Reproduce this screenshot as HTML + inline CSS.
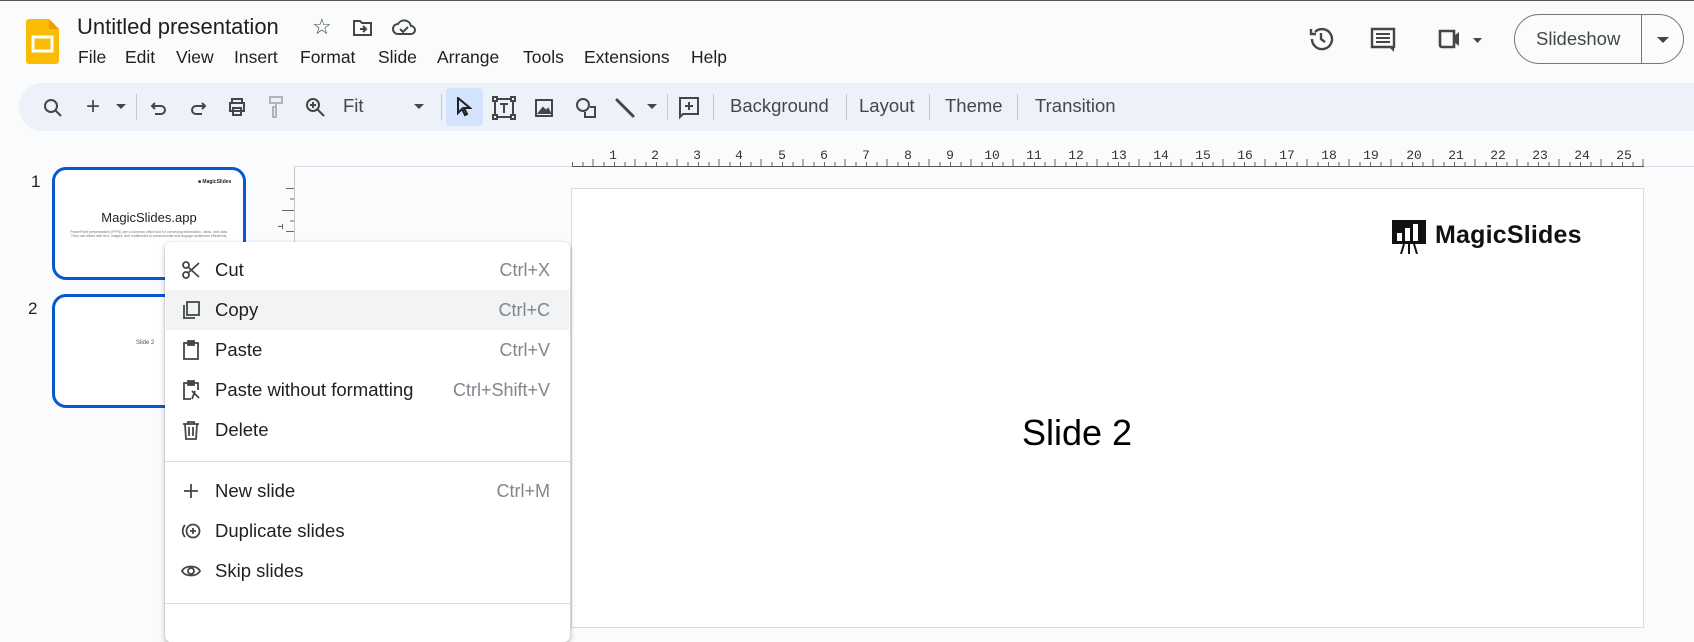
<!DOCTYPE html>
<html><head><meta charset="utf-8"><style>
*{margin:0;padding:0;box-sizing:border-box}
body{width:1694px;height:623px;overflow:hidden;background:#f9fbfd;font-family:"Liberation Sans",Arial,sans-serif;position:relative;color:#1f1f1f}
.a{position:absolute}
.ic{position:absolute;fill:none;stroke:#444746;stroke-width:2}
.tb{position:absolute;top:95px;font-size:18.5px;color:#444746}
.sep{position:absolute;top:94px;width:1px;height:26px;background:#c7c7c7}
.mi{position:absolute;left:165px;width:405px;height:40px;font-size:18.5px;line-height:40px}
.mi .t{position:absolute;left:50px}
.mi .k{position:absolute;right:20px;color:#80868b;font-size:18px}
.mi svg{position:absolute;left:16px;top:10px;width:20px;height:20px;fill:none;stroke:#444746;stroke-width:1.8}
</style></head><body>
<div class="a" style="left:0;top:0;width:1694px;height:1px;background:#555"></div>
<svg class="a" style="left:26px;top:19px" width="33" height="45" viewBox="0 0 33 45"><path d="M3 0h20l10 10v32a3 3 0 0 1-3 3H3a3 3 0 0 1-3-3V3a3 3 0 0 1 3-3z" fill="#fbbc04"/><path d="M23 0l10 10h-10z" fill="#f29900"/><rect x="7" y="18" width="19" height="14" fill="none" stroke="#fff" stroke-width="3"/></svg>
<div class="a" style="left:77px;top:14px;font-size:22px;color:#1f1f1f">Untitled presentation</div>
<div class="a" style="left:312px;top:14px;font-size:22px;color:#444746">☆</div>
<svg class="ic" style="left:353px;top:19px" width="20" height="18" viewBox="0 0 20 18"><path d="M1 2h6l2 2h9v12H1z"/><path d="M7 10h6M10 7l3 3-3 3"/></svg>
<svg class="ic" style="left:392px;top:18px" width="24" height="18" viewBox="0 0 24 18"><path d="M6 16a5 5 0 0 1 0-10 7 7 0 0 1 13 2 4 4 0 0 1 0 8z"/><path d="M8 11l3 3 5-5"/></svg>
<div class="a" style="top:47px;font-size:17.5px;left:0">
<span class="a" style="left:78px">File</span><span class="a" style="left:125px">Edit</span><span class="a" style="left:176px">View</span><span class="a" style="left:234px">Insert</span><span class="a" style="left:300px">Format</span><span class="a" style="left:378px">Slide</span><span class="a" style="left:437px">Arrange</span><span class="a" style="left:523px">Tools</span><span class="a" style="left:584px">Extensions</span><span class="a" style="left:691px">Help</span></div>
<svg class="ic" style="left:1308px;top:26px;stroke-width:2.4" width="26" height="26" viewBox="0 0 26 26"><path d="M4 13a10 10 0 1 0 3-7"/><path d="M3 3v5h5"/><path d="M13 7v6l4 3"/></svg>
<svg class="a" style="left:1370px;top:27px" width="26" height="26" viewBox="0 0 26 26"><path d="M2 2h22v18H2z" fill="none" stroke="#444746" stroke-width="2.4"/><path d="M6 7h14M6 11h14M6 15h14" stroke="#444746" stroke-width="2"/><path d="M19 20l5 5v-5z" fill="#444746"/></svg>
<svg class="a" style="left:1437px;top:28px" width="48" height="24" viewBox="0 0 48 24"><path d="M3 3h14v16H5a2 2 0 0 1-2-2z" fill="none" stroke="#444746" stroke-width="2.6"/><path d="M17 8l5-4v14l-5-4z" fill="#444746"/><path d="M36 10h9l-4.5 5z" fill="#444746"/></svg>
<div class="a" style="left:1514px;top:14px;width:170px;height:50px;border:1px solid #747775;border-radius:25px"></div>
<div class="a" style="left:1641px;top:15px;width:1px;height:48px;background:#747775"></div>
<div class="a" style="left:1536px;top:28px;font-size:18.5px;color:#444746">Slideshow</div>
<svg class="a" style="left:1656px;top:36px" width="14" height="8"><path d="M1 1h12l-6 6z" fill="#444746"/></svg>
<div class="a" style="left:19px;top:83px;width:1700px;height:48px;background:#edf2fa;border-radius:24px"></div>
<div class="a" style="left:446px;top:88px;width:37px;height:38px;background:#d3e3fd;border-radius:4px"></div>
<svg class="ic" style="left:43px;top:98px" width="20" height="20" viewBox="0 0 20 20"><circle cx="8" cy="8" r="6"/><path d="M12 12l6 6"/></svg>
<div class="tb" style="left:86px;top:93px;font-size:24px;color:#444746">+</div>
<svg class="a" style="left:116px;top:104px" width="10" height="6"><path d="M0 0h10l-5 5z" fill="#444746"/></svg>
<div class="sep" style="left:136px"></div>
<svg class="ic" style="left:150px;top:99px" width="18" height="18" viewBox="0 0 18 18"><path d="M5 4L2 7l3 3"/><path d="M2 7h9a4 4 0 0 1 0 8H5"/></svg>
<svg class="ic" style="left:189px;top:99px" width="18" height="18" viewBox="0 0 18 18"><path d="M13 4l3 3-3 3"/><path d="M16 7H7a4 4 0 0 0 0 8h6"/></svg>
<svg class="ic" style="left:227px;top:97px" width="20" height="20" viewBox="0 0 20 20"><path d="M5 6V2h10v4M3 6h14v8H3zM6 11h8v7H6z"/></svg>
<svg class="ic" style="left:267px;top:95px;stroke:#b0b4b8" width="18" height="24" viewBox="0 0 18 24"><path d="M3 2h12v6H3zM9 8v4H6v10h3V12"/></svg>
<svg class="ic" style="left:305px;top:97px" width="22" height="22" viewBox="0 0 22 22"><circle cx="8" cy="8" r="6"/><path d="M12 12l7 7M8 5v6M5 8h6"/></svg>
<div class="tb" style="left:343px">Fit</div>
<svg class="a" style="left:414px;top:104px" width="10" height="6"><path d="M0 0h10l-5 5z" fill="#444746"/></svg>
<div class="sep" style="left:441px"></div>
<svg class="a" style="left:456px;top:97px" width="16" height="20" viewBox="0 0 16 20"><path d="M2 1v15l4-4 3 6 2-1-3-6h6z" fill="none" stroke="#1f1f1f" stroke-width="2"/></svg>
<svg class="ic" style="left:492px;top:96px" width="24" height="24" viewBox="0 0 24 24"><rect x="1" y="1" width="4" height="4"/><rect x="19" y="1" width="4" height="4"/><rect x="1" y="19" width="4" height="4"/><rect x="19" y="19" width="4" height="4"/><path d="M5 3h14M5 21h14M3 5v14M21 5v14M8 8h8M12 8v9"/></svg>
<svg class="ic" style="left:534px;top:98px" width="20" height="20" viewBox="0 0 20 20"><rect x="2" y="2" width="16" height="16"/><path d="M5 15l4-5 3 3 2-2 2 4z" fill="#444746"/></svg>
<svg class="ic" style="left:575px;top:97px" width="22" height="22" viewBox="0 0 22 22"><circle cx="8" cy="8" r="6"/><path d="M15 10h5v10H10v-5"/></svg>
<svg class="a" style="left:614px;top:97px" width="22" height="22" viewBox="0 0 22 22"><path d="M3 3l16 16" stroke="#444746" stroke-width="3" stroke-linecap="round"/></svg>
<svg class="a" style="left:647px;top:104px" width="10" height="6"><path d="M0 0h10l-5 5z" fill="#444746"/></svg>
<div class="sep" style="left:667px"></div>
<svg class="ic" style="left:678px;top:96px" width="22" height="24" viewBox="0 0 22 24"><path d="M2 2h18v16H5l-3 3z"/><path d="M11 6v8M7 10h8"/></svg>
<div class="sep" style="left:713px"></div>
<div class="tb" style="left:730px">Background</div>
<div class="sep" style="left:846px"></div>
<div class="tb" style="left:859px">Layout</div>
<div class="sep" style="left:929px"></div>
<div class="tb" style="left:945px">Theme</div>
<div class="sep" style="left:1017px"></div>
<div class="tb" style="left:1035px">Transition</div>
<div class="a" style="left:31px;top:172px;font-size:17px">1</div>
<div class="a" style="left:28px;top:299px;font-size:17px">2</div>
<div class="a" style="left:52px;top:167px;width:194px;height:113px;border:3px solid #0b57d0;border-radius:14px;background:#fff;overflow:hidden">
<div class="a" style="left:143px;top:9px;font-size:5px;font-weight:bold">■ MagicSlides</div>
<div class="a" style="left:0;width:188px;top:40px;text-align:center;font-size:13px">MagicSlides.app</div>
<div class="a" style="left:12px;width:164px;top:60px;text-align:center;font-size:3.5px;line-height:4px;color:#777">PowerPoint presentations (PPTs) are a common office tool for conveying information, ideas, and data. They use slides with text, images, and multimedia to communicate and engage audiences effectively.</div></div>
<div class="a" style="left:52px;top:294px;width:194px;height:114px;border:3px solid #0b57d0;border-radius:14px;background:#fff">
<div class="a" style="left:81px;top:43px;font-size:6px;color:#555">Slide 2</div></div>
<div class="a" style="left:294px;top:166px;width:1px;height:460px;background:#c7c7c7"></div>
<div class="a" style="left:294px;top:166px;width:1400px;height:1px;background:#dadce0"></div>
<svg class="a" style="left:570px;top:146px" width="1080" height="22">
<line x1="2" y1="20.5" x2="1074" y2="20.5" stroke="#555"/>
<g font-family="Liberation Mono,monospace" font-size="13" fill="#333" text-anchor="middle">
<text x="43" y="13">1</text><text x="85" y="13">2</text><text x="127" y="13">3</text><text x="169" y="13">4</text><text x="212" y="13">5</text><text x="254" y="13">6</text><text x="296" y="13">7</text><text x="338" y="13">8</text><text x="380" y="13">9</text><text x="422" y="13">10</text><text x="464" y="13">11</text><text x="506" y="13">12</text><text x="549" y="13">13</text><text x="591" y="13">14</text><text x="633" y="13">15</text><text x="675" y="13">16</text><text x="717" y="13">17</text><text x="759" y="13">18</text><text x="801" y="13">19</text><text x="844" y="13">20</text><text x="886" y="13">21</text><text x="928" y="13">22</text><text x="970" y="13">23</text><text x="1012" y="13">24</text><text x="1054" y="13">25</text>
</g>
<path stroke="#666" d="M2.5 20v-4M13 20v-4M23 20v-7M34 20v-4M44.5 20v-4M55 20v-4M65 20v-7M76 20v-4M86.5 20v-4M97 20v-4M107 20v-7M118 20v-4M128.5 20v-4M139 20v-4M149 20v-7M160 20v-4M170.5 20v-4M181 20v-4M191 20v-7M202 20v-4M212.5 20v-4M223 20v-4M233 20v-7M244 20v-4M254.5 20v-4M265 20v-4M275 20v-7M286 20v-4M296.5 20v-4M307 20v-4M317 20v-7M328 20v-4M338.5 20v-4M349 20v-4M359 20v-7M370 20v-4M380.5 20v-4M391 20v-4M401 20v-7M412 20v-4M422.5 20v-4M433 20v-4M443 20v-7M454 20v-4M464.5 20v-4M475 20v-4M485 20v-7M496 20v-4M506.5 20v-4M517 20v-4M527 20v-7M538 20v-4M548.5 20v-4M559 20v-4M569 20v-7M580 20v-4M590.5 20v-4M601 20v-4M611 20v-7M622 20v-4M632.5 20v-4M643 20v-4M653 20v-7M664 20v-4M674.5 20v-4M685 20v-4M695 20v-7M706 20v-4M716.5 20v-4M727 20v-4M737 20v-7M748 20v-4M758.5 20v-4M769 20v-4M779 20v-7M790 20v-4M800.5 20v-4M811 20v-4M821 20v-7M832 20v-4M842.5 20v-4M853 20v-4M863 20v-7M874 20v-4M884.5 20v-4M895 20v-4M905 20v-7M916 20v-4M926.5 20v-4M937 20v-4M947 20v-7M958 20v-4M968.5 20v-4M979 20v-4M989 20v-7M1000 20v-4M1010.5 20v-4M1021 20v-4M1031 20v-7M1042 20v-4M1052.5 20v-4M1063 20v-4M1073 20v-7"/>
</svg>
<svg class="a" style="left:278px;top:186px" width="16" height="56"><path stroke="#666" d="M8 2.5h8M12 13h4M4 24.5h12M12 35h4M8 45.5h8"/><text x="5" y="44" font-size="11" fill="#444" transform="rotate(-90 5 44)" font-family="Liberation Mono,monospace">1</text></svg>
<div class="a" style="left:571px;top:188px;width:1073px;height:440px;background:#fff;border:1px solid #dadce0"></div>
<svg class="a" style="left:1392px;top:220px" width="34" height="34" viewBox="0 0 34 34"><rect x="0" y="0" width="34" height="24" fill="#111"/><rect x="5" y="13" width="5" height="8" fill="#fff"/><rect x="13" y="8" width="5" height="13" fill="#fff"/><rect x="21" y="4" width="5" height="17" fill="#fff"/><path d="M12 24l-3 10M17 24v10M22 24l3 10" stroke="#111" stroke-width="2"/></svg>
<div class="a" style="left:1435px;top:221px;font-size:25px;font-weight:bold;color:#111;letter-spacing:.2px">MagicSlides</div>
<div class="a" style="left:1022px;top:412px;font-size:36px;color:#000">Slide 2</div>
<div class="a" style="left:165px;top:242px;width:405px;height:400px;background:#fff;border-radius:6px;box-shadow:0 2px 6px rgba(0,0,0,.25),0 1px 2px rgba(0,0,0,.15)"></div>
<div class="a" style="left:166px;top:290px;width:403px;height:40px;background:#f1f3f4"></div>
<div class="mi" style="top:250px"><svg viewBox="0 0 20 20"><circle cx="5" cy="5" r="3"/><circle cx="5" cy="15" r="3"/><path d="M7 7l11 10M7 13L18 3"/></svg><span class="t">Cut</span><span class="k">Ctrl+X</span></div>
<div class="mi" style="top:290px"><svg viewBox="0 0 20 20"><rect x="6" y="2" width="12" height="13"/><path d="M3 5v13h11"/></svg><span class="t">Copy</span><span class="k">Ctrl+C</span></div>
<div class="mi" style="top:330px"><svg viewBox="0 0 20 20"><rect x="3" y="3" width="14" height="16"/><rect x="7" y="1" width="6" height="4" fill="#444746"/></svg><span class="t">Paste</span><span class="k">Ctrl+V</span></div>
<div class="mi" style="top:370px"><svg viewBox="0 0 20 20"><path d="M10 19H3V3h14v7"/><rect x="7" y="1" width="6" height="4" fill="#444746"/><path d="M11 11l7 7M14 11l-3 8"/></svg><span class="t">Paste without formatting</span><span class="k">Ctrl+Shift+V</span></div>
<div class="mi" style="top:410px"><svg viewBox="0 0 20 20"><path d="M2 4h16M7 4V2h6v2M4 4l1 15h10l1-15M8 7v9M12 7v9"/></svg><span class="t">Delete</span></div>
<div class="a" style="left:165px;top:461px;width:405px;height:1px;background:#dadce0"></div>
<div class="mi" style="top:471px"><svg viewBox="0 0 20 20"><path d="M10 3v14M3 10h14"/></svg><span class="t">New slide</span><span class="k">Ctrl+M</span></div>
<div class="mi" style="top:511px"><svg viewBox="0 0 20 20"><circle cx="12" cy="10" r="6.5"/><path d="M4 4a9 9 0 0 0 0 12M12 7v6M9 10h6"/></svg><span class="t">Duplicate slides</span></div>
<div class="mi" style="top:551px"><svg viewBox="0 0 20 20"><path d="M1 10c3-6 15-6 18 0-3 6-15 6-18 0z"/><circle cx="10" cy="10" r="3"/></svg><span class="t">Skip slides</span></div>
<div class="a" style="left:165px;top:603px;width:405px;height:1px;background:#dadce0"></div>
</body></html>
